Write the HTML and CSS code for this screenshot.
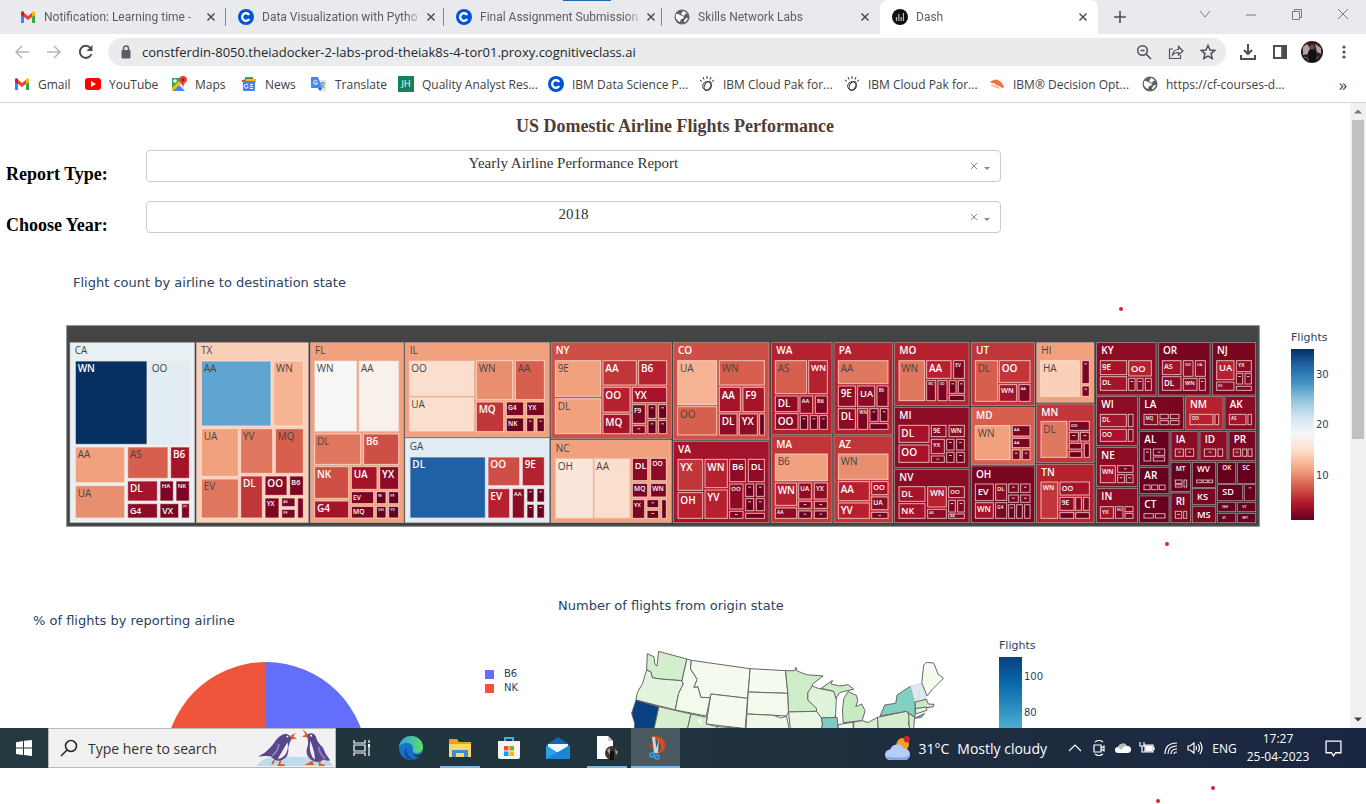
FILE: index.html
```html
<!DOCTYPE html>
<html lang="en">
<head>
<meta charset="utf-8">
<title>Dash</title>
<link rel="stylesheet" href="styles.css">
</head>
<body>
<svg class="defs" width="0" height="0" aria-hidden="true">
  <symbol id="gmail" viewBox="0 0 16 16"><path d="M1 3.5V14h3V7z" fill="#4285f4"/><path d="M12 7v7h3V3.500z" fill="#34a853"/><path d="M4 3.800V8l4 3 4-3V3.800L8 7z" fill="#ea4335"/><path d="M1 3.500C1 2 3 1.800 4 3v5L1 6z" fill="#c5221f"/><path d="M15 3.500C15 2 13 1.800 12 3v5l3-2z" fill="#fbbc04"/></symbol>
  <symbol id="coursera" viewBox="0 0 16 16"><circle cx="8" cy="8" r="8" fill="#0056d2"/><path d="M11.200 6A3.800 3.800 0 1 0 11.200 10" fill="none" stroke="#fff" stroke-width="2.300"/></symbol>
  <symbol id="globe" viewBox="0 0 16 16"><circle cx="8" cy="8" r="7.500" fill="#5f6368"/><path d="M2 5q3-.5 5 1.500 2 0 3 2-1 1.500-3 1.500l-1 3Q2 11 1.800 8zM9 2q3 .5 4 2.500l-2 .5-1 2-3-2zM12 9l2 0q-1 3-3.500 4.500L10 12z" fill="#fff"/></symbol>
  <symbol id="watson" viewBox="0 0 16 16"><g fill="none" stroke="#333" stroke-width="1"><circle cx="8" cy="10" r="4.300"/><ellipse cx="8.500" cy="9.500" rx="3" ry="4.800" transform="rotate(30 8 10)"/><path d="M8 0v3M4 1l1 2.500M12 1l-1 2.500M1 4l2 1.500M15 4l-2 1.500"/></g></symbol>
  <symbol id="close" viewBox="0 0 10 10"><path d="M1.500 1.500l7 7M8.500 1.500l-7 7" stroke="#4b4e52" stroke-width="1.500"/></symbol>
</svg>

<header class="browser">
  <nav class="tabs" aria-label="Tabs">
    <div class="tab"><svg class="fav"><use href="#gmail"/></svg><span class="tab-name">Notification: Learning time -</span><button class="x" aria-label="Close tab"><svg><use href="#close"/></svg></button></div>
    <div class="tab"><svg class="fav"><use href="#coursera"/></svg><span class="tab-name">Data Visualization with Pytho</span><button class="x" aria-label="Close tab"><svg><use href="#close"/></svg></button></div>
    <div class="tab"><svg class="fav"><use href="#coursera"/></svg><span class="tab-name">Final Assignment Submission</span><button class="x" aria-label="Close tab"><svg><use href="#close"/></svg></button></div>
    <div class="tab last"><svg class="fav"><use href="#globe"/></svg><span class="tab-name">Skills Network Labs</span><button class="x" aria-label="Close tab"><svg><use href="#close"/></svg></button></div>
    <div class="tab active"><svg class="fav" viewBox="0 0 16 16"><circle cx="8" cy="8" r="8" fill="#111"/><path d="M4.500 12V8M6.800 12V5M9.100 12V8M11.400 12V4" stroke="#bbb" stroke-width="1.200"/></svg><span class="tab-name">Dash</span><button class="x" aria-label="Close tab"><svg><use href="#close"/></svg></button></div>
    <button class="new-tab" aria-label="New tab"><svg viewBox="0 0 12 12"><path d="M6 0v12M0 6h12" stroke="#4b4e52" stroke-width="1.600"/></svg></button>
    <div class="window-buttons">
      <button aria-label="Search tabs"><svg viewBox="0 0 12 12"><path d="M1 3l5 6 5-6"/></svg></button>
      <button aria-label="Minimize"><svg viewBox="0 0 12 12"><path d="M1 7h10"/></svg></button>
      <button aria-label="Restore"><svg viewBox="0 0 12 12"><path d="M1.500 3.500h7v8h-7zM3.500 3.500v-2h7v8h-2"/></svg></button>
      <button aria-label="Close window"><svg viewBox="0 0 12 12"><path d="M1 1l10 10M11 1L1 11"/></svg></button>
    </div>
    <span class="drag-mark"></span>
  </nav>

  <div class="toolbar">
    <button aria-label="Back"><svg viewBox="0 0 16 16" class="off"><path d="M15 8H2M8 2L2 8l6 6"/></svg></button>
    <button aria-label="Forward"><svg viewBox="0 0 16 16" class="off"><path d="M1 8h13M8 2l6 6-6 6"/></svg></button>
    <button aria-label="Reload"><svg viewBox="0 0 16 16"><path d="M13.500 10A6 6 0 1 1 12.500 4" stroke-width="2"/><path d="M14.500 1v6h-6z" fill="#4b4e52" stroke="none"/></svg></button>
    <div class="omnibox">
      <svg class="lock" viewBox="0 0 10 14"><rect x="0.500" y="5" width="9" height="8.500" rx="1" fill="#5a5d61"/><path d="M2.500 5V3.500a2.500 2.500 0 0 1 5 0V5" fill="none" stroke="#5a5d61" stroke-width="1.500"/></svg>
      <input class="url" type="text" aria-label="Address" value="constferdin-8050.theiadocker-2-labs-prod-theiak8s-4-tor01.proxy.cognitiveclass.ai">
      <button aria-label="Zoom"><svg viewBox="0 0 16 16"><circle cx="6.500" cy="6.500" r="4.800"/><path d="M10 10l5 5M4.500 6.500h4"/></svg></button>
      <button aria-label="Share"><svg viewBox="0 0 16 16"><path d="M5 5H1.500v9.500h11V11M4.500 11c.5-4 3-5.500 6-5.500V2.500L15 7l-4.500 4V8.500c-2.500 0-4.500.5-6 2.500z" stroke-width="1.200"/></svg></button>
      <button aria-label="Bookmark"><svg viewBox="0 0 16 16"><path d="M8 1.500l2 4.500 4.700.4-3.600 3.200 1.100 4.900L8 12l-4.200 2.500 1.100-4.900L1.300 6.400 6 6z"/></svg></button>
    </div>
    <button aria-label="Downloads"><svg viewBox="0 0 16 16"><path d="M8 0v9M4 6l4 4 4-4M1 11v4h14v-4" stroke-width="2"/></svg></button>
    <button aria-label="Side panel"><svg viewBox="0 0 16 16"><path d="M2 2h12v12H2zM11 2v12" stroke-width="2"/><path d="M10 2h4v12h-4z" fill="#4b4e52"/></svg></button>
    <button aria-label="Profile"><svg class="avatar" viewBox="0 0 22 22"><circle cx="11" cy="11" r="11" fill="#292124"/><path d="M2 6l4-3 3 4-2 6-5 1zM14 3l6 4v6l-4-2z" fill="#b5a49b"/><circle cx="11" cy="6" r="2.500" fill="#6b4a3c"/><path d="M7 21V11q4-5 8 0v10z" fill="#111018"/><path d="M3 16l4 1v3M18 15l-3 3" stroke="#7a6258" stroke-width="1" fill="none"/></svg></button>
    <button aria-label="Menu"><svg viewBox="0 0 16 16"><g fill="#4b4e52" stroke="none"><circle cx="8" cy="3" r="1.600"/><circle cx="8" cy="8" r="1.600"/><circle cx="8" cy="13" r="1.600"/></g></svg></button>
  </div>

  <nav class="bookmarks" aria-label="Bookmarks">
    <a href="#"><svg><use href="#gmail"/></svg>Gmail</a>
    <a href="#"><svg viewBox="0 0 16 16"><rect y="2" width="16" height="12" rx="3" fill="#f00"/><path d="M6 5l5 3-5 3z" fill="#fff"/></svg>YouTube</a>
    <a href="#"><svg viewBox="0 0 16 16"><path d="M1 2h12v13H1z" fill="#34a853"/><path d="M1 15L13 4v11z" fill="#e8eaed"/><path d="M1 15l7-6 6 6z" fill="#4285f4"/><path d="M1 12l8-8 2 2-9 9H1z" fill="#fbbc04"/><path d="M12 0a4 4 0 0 1 4 4c0 2-3 3-4 7-1-4-4-5-4-7a4 4 0 0 1 4-4z" fill="#ea4335"/><circle cx="12" cy="4" r="1.400" fill="#8b1a12"/><circle cx="4" cy="5" r="1.800" fill="#fff"/></svg>Maps</a>
    <a href="#"><svg viewBox="0 0 16 16"><path d="M4 1h8v5H4z" fill="#34a853"/><path d="M1 4l11-2v4H1z" fill="#ea4335"/><path d="M5 3h10v4H5z" fill="#fbbc04"/><rect x="2" y="5" width="12" height="10" rx="1" fill="#4285f4"/><path d="M7 9A2 2 0 1 0 7.200 11H6M9 8.500h3M9 10.500h3M9 12.500h3" fill="none" stroke="#fff"/></svg>News</a>
    <a href="#"><svg viewBox="0 0 16 16"><path d="M6 4h9v11.500H9z" fill="#dfe3e8"/><path d="M0 1h7l4 11H1q-1 0-1-1z" fill="#4285f4"/><path d="M6 5A2 2 0 1 0 6.500 7H4.500" fill="none" stroke="#fff"/><path d="M9 7h5M11.500 6v1M10 8l3 4M13.500 8l-3.500 4" stroke="#607d9b" fill="none"/><path d="M7 12h4l-2 3z" fill="#1a56b8"/></svg>Translate</a>
    <a href="#"><span class="jh">JH</span>Quality Analyst Res...</a>
    <a href="#"><svg><use href="#coursera"/></svg>IBM Data Science P...</a>
    <a href="#"><svg><use href="#watson"/></svg>IBM Cloud Pak for...</a>
    <a href="#"><svg><use href="#watson"/></svg>IBM Cloud Pak for...</a>
    <a href="#"><svg viewBox="0 0 16 16"><path d="M1 6q6-5 11 0 3 3 3 6-3 0-5-2-4-1-5-3-2 1-4-1z" fill="#f0743e"/><path d="M1 9q5-1 11 4-6-1-11-4z" fill="#f7b48f"/></svg>IBM® Decision Opt...</a>
    <a href="#"><svg><use href="#globe"/></svg>https://cf-courses-d...</a>
    <button class="more" aria-label="More bookmarks">»</button>
  </nav>
</header>

<div class="viewport">
  <main>
    <h1>US Domestic Airline Flights Performance</h1>
    <form class="filters">
      <label for="report">Report Type:</label>
      <div class="dropdown">
        <select id="report"><option>Yearly Airline Performance Report</option></select>
        <span class="marks"><svg viewBox="0 0 24 12"><path d="M2 3l6 6M8 3l-6 6" stroke="#888"/><path d="M15 7h6l-3 3z" fill="#888"/></svg></span>
      </div>
      <label for="year">Choose Year:</label>
      <div class="dropdown">
        <select id="year"><option>2018</option></select>
        <span class="marks"><svg viewBox="0 0 24 12"><path d="M2 3l6 6M8 3l-6 6" stroke="#888"/><path d="M15 7h6l-3 3z" fill="#888"/></svg></span>
      </div>
    </form>

    <section class="tree-graph">
      <h2>Flight count by airline to destination state</h2>
      <div class="tree-row">
        <svg id="treemap" viewBox="0 15 3582 606" role="img" aria-label="Treemap of flights by state and airline"></svg>
        <div class="scale">
          <p>Flights</p>
          <svg viewBox="0 0 50 172">
            <defs><linearGradient id="rdbu" x2="0" y2="1"><stop offset="0" stop-color="#053061"/><stop offset=".1" stop-color="#2166ac"/><stop offset=".2" stop-color="#4393c3"/><stop offset=".3" stop-color="#92c5de"/><stop offset=".4" stop-color="#d1e5f0"/><stop offset=".5" stop-color="#f7f7f7"/><stop offset=".6" stop-color="#fddbc7"/><stop offset=".7" stop-color="#f4a582"/><stop offset=".8" stop-color="#d6604d"/><stop offset=".9" stop-color="#b2182b"/><stop offset="1" stop-color="#67001f"/></linearGradient></defs>
            <rect width="23" height="171" fill="url(#rdbu)"/>
            <text x="25" y="29">30</text><text x="25" y="79">20</text><text x="25" y="130">10</text>
          </svg>
        </div>
      </div>
    </section>

    <div class="lower">
      <section class="pie-graph">
        <h2>% of flights by reporting airline</h2>
        <div class="pie-row">
          <svg class="pie" viewBox="0 0 206 206" role="img" aria-label="Pie chart"><path d="M103 103V0a103 103 0 0 1 0 206z" fill="#636efa"/><path d="M103 103V0a103 103 0 0 0 0 206z" fill="#ef553b"/></svg>
          <ul class="legend"><li class="b6">B6</li><li class="nk">NK</li></ul>
        </div>
      </section>
      <section class="map-graph">
        <h2>Number of flights from origin state</h2>
        <div class="map-row">
          <svg class="map" viewBox="0 0 1180 330" role="img" aria-label="Map of the United States">
            <g stroke="#666" stroke-width="3" stroke-linejoin="round">
              <path fill="#d3eecd" d="M112 71L132 80L135 103L141 108L146 64L231 87L216 152L150 147L127 143L123 126L110 120Z"/>
              <path fill="#e2f4dd" d="M110 120L123 126L127 143L150 147L216 152L220 162L206 190L196 240L78 210L82 188L98 160Z"/>
              <path fill="#084081" d="M78 210L147 230L125 330L72 330L74 280L65 250Z"/>
              <path fill="#f3faec" d="M231 87L244 91L242 117L262 148L252 172L264 170L273 202L301 203L289 258L196 240L206 190L220 162L216 152Z"/>
              <path fill="#f4faed" d="M244 91L421 116L413 205L303 192L301 203L273 202L264 170L252 172L262 148L242 117Z"/>
              <path fill="#f6fbf0" d="M303 192L413 205L406 296L289 282Z"/>
              <path fill="#d6efd0" d="M147 230L243 252L225 330H125Z"/>
              <path fill="#d3eecd" d="M243 252L291 262L289 282L322 290L318 330H225Z"/>
              <path fill="#e8f6e3" d="M322 290L406 296V330H318Z"/>
              <path fill="#f5fbef" d="M421 116L527 122L534 190L415 186Z"/>
              <path fill="#f3faec" d="M415 186L534 190L536 246L530 258L411 252Z"/>
              <path fill="#edf8e7" d="M411 252L490 256L515 264L530 258L545 330H406Z"/>
              <path fill="#ceecc8" d="M527 122L555 122L558 112L562 123L590 134L640 138L608 162L607 172L594 188L594 210L620 235L620 244L536 246L534 190Z"/>
              <path fill="#e0f3db" d="M607 168L625 175L672 184L680 196L677 262L635 264L620 250L620 235L594 210L594 188Z"/>
              <path fill="#ceecc8" d="M634 175L668 151L664 162L690 168L715 164L732 178L700 185L690 188L678 205L672 184Z"/>
              <path fill="#c8eac3" d="M715 185L740 196L744 212L738 230L756 222L766 243L757 272L700 278L698 240L702 205Z"/>
              <path fill="#e9f7e3" d="M536 246L620 244L635 264L638 285L625 330H545Z"/>
              <path fill="#7accc4" d="M635 264L682 262L688 330H625L638 285Z"/>
              <path fill="#f0f9e8" d="M685 284L730 277V330H688Z"/>
              <path fill="#d9f0d3" d="M732 276L757 272L775 278L803 262L808 330H730Z"/>
              <path fill="#d3eecd" d="M803 262L890 244L900 258L896 282L902 294L885 330H808Z"/>
              <path fill="#82d0c2" d="M811 258L825 225L858 220L862 195L903 168L916 218L916 262L890 244Z"/>
              <path fill="#64becb" d="M914 265L945 250L935 262Z"/>
              <path fill="#dfe7f2" stroke="#d2dbe8" d="M903 168L936 160L950 208L916 216ZM930 175L924 210"/>
              <path fill="#f5fbef" d="M936 158L942 105L950 97L972 99L985 132L1001 145L968 178L952 198Z"/>
              <path fill="#c8eac3" d="M916 216L950 208L956 222L973 223L970 231L917 236Z"/>
              <path fill="#e0f3db" d="M917 236L948 231L952 241L918 252Z"/>
              <path fill="#d3eecd" d="M897 250L914 262L912 300L904 330L898 285Z"/>
            </g>
            <path fill="#fff" d="M262 268l10-2 4 18-8-6z"/>
          </svg>
          <div class="scale">
            <p>Flights</p>
            <svg viewBox="0 0 50 172">
              <defs><linearGradient id="gnbu" x2="0" y2="1"><stop offset="0" stop-color="#084081"/><stop offset=".15" stop-color="#0868ac"/><stop offset=".29" stop-color="#2b8cbe"/><stop offset=".43" stop-color="#4eb3d3"/><stop offset="1" stop-color="#ccebc5"/></linearGradient></defs>
              <rect width="23" height="171" fill="url(#gnbu)"/>
              <text x="25" y="23">100</text><text x="25" y="59">80</text>
            </svg>
          </div>
        </div>
      </section>
    </div>
  </main>
  <div class="scrollbar" aria-hidden="true"><svg viewBox="0 0 16 16"><path d="M4 10h8L8 6z" fill="#777"/></svg><span></span><svg viewBox="0 0 16 16"><path d="M4 6h8l-4 4z" fill="#444"/></svg></div>
</div>

<footer class="taskbar">
  <button class="start" aria-label="Start"><svg viewBox="0 0 16 16"><path d="M0 2.200L7 1v6.500H0zM8 .8L16 0v7.500H8zM0 8.500h7V15L0 14zM8 8.500h8V16l-8-.9z" fill="#fff"/></svg></button>
  <div class="search">
    <svg class="glass" viewBox="0 0 18 18"><circle cx="11" cy="7" r="5.500"/><path d="M7 11l-6 6"/></svg>
    <input type="text" aria-label="Search" placeholder="Type here to search">
    <svg class="birds" viewBox="0 0 80 40">
      <path d="M0 39q4-9 22-10l40 1q15 2 18 9z" fill="#bcdcec"/>
      <path d="M1 29q9-4 16-13 6-10 13-11 6 1 6 6-2 4-3 8 1 11-7 14-7 2-11-4-5-1-14 0z" fill="#57488b"/>
      <path d="M32 14q2 8-3 14-4 4-7 3 5-8 10-17z" fill="#f3eef6"/><path d="M35 7l6-3-3 4 4 2-6 1z" fill="#e5532b"/><circle cx="32" cy="8" r="1" fill="#fff"/>
      <path d="M18 33l-2 4M25 33l-2 5h6" stroke="#e5532b" stroke-width="2" fill="none"/>
      <path d="M23 16q-1 8-7 12" stroke="#8c80bd" stroke-width="2" fill="none"/>
      <path d="M52 6q7-4 10 2 1 6 7 11 3 8 8 14-3 1-7-1-6 5-12 1-8-5-5-14 2-7-1-13z" fill="#57488b"/>
      <path d="M56 12q5 12 5 20-7-5-5-20z" fill="#f3eef6"/><path d="M53 9l-6-1 4-2-3-6 6 6z" fill="#e5532b"/><circle cx="57" cy="7" r="1" fill="#fff"/>
      <path d="M65 19q1 8 7 12" stroke="#8c80bd" stroke-width="2" fill="none"/>
      <path d="M59 34l-5 3h6M66 34v4h5" stroke="#e5532b" stroke-width="2" fill="none"/>
    </svg>
  </div>
  <div class="apps">
    <button aria-label="Task view"><svg class="small" viewBox="0 0 18 18"><path d="M1 1v3h11V1M1 6h11v6H1zM1 17v-3h11v3M16 1v3M16 8v9" fill="none" stroke="#fff" stroke-width="1.200"/><path d="M15 5h2v3h-2z" fill="#fff"/></svg></button>
    <button aria-label="Edge"><svg viewBox="0 0 24 24"><defs><linearGradient id="edge" x2="1"><stop offset="0" stop-color="#2aa7e8"/><stop offset="1" stop-color="#5edc63"/></linearGradient></defs><circle cx="12" cy="12" r="12" fill="#1673c9"/><path d="M0 11C1 3 8 0 12 0c8 0 12 6 12 11 0 4-3 6-6 6s-5-1-4-3c1-5-3-7-6-7-4 0-7 2-8 4z" fill="url(#edge)"/><path d="M13 13c-1 4 1 6 5 6q4 0 6-3l-2 5-5 0q-5-3-4-8z" fill="#223840"/><path d="M8 11c-2 5 2 11 10 12q-4 2-9 0c-5-3-4-10-1-12z" fill="#0f4f9e"/></svg></button>
    <button class="running" aria-label="File Explorer"><svg viewBox="0 0 24 24"><path d="M1 3h8l2 3h12v15H1z" fill="#e6a520"/><path d="M1 8h22v13H1z" fill="#ffd66b"/><path d="M4 14h16v7h-4v-4H8v4H4z" fill="#3b8ed4"/></svg></button>
    <button aria-label="Store"><svg viewBox="0 0 24 24"><path d="M8 7V2h8v5" fill="none" stroke="#37b3e6" stroke-width="2"/><path d="M1 5h22v16q0 2-2 2H3q-2 0-2-2z" fill="#f4f4f4"/><path d="M7 10h4.500v4.500H7z" fill="#f25022"/><path d="M12.500 10H17v4.500h-4.500z" fill="#7fba00"/><path d="M7 15.500h4.500V20H7z" fill="#00a4ef"/><path d="M12.500 15.500H17V20h-4.500z" fill="#ffb900"/></svg></button>
    <button aria-label="Mail"><svg viewBox="0 0 24 24"><path d="M0 9l12-8 12 8z" fill="#1264b4"/><path d="M2 8h20v8H2z" fill="#f3f6fa"/><path d="M0 9l12 8 12-8v14H0z" fill="#28a1ea"/><path d="M0 23l24-14v14z" fill="#1b86d6"/></svg></button>
    <button class="running" aria-label="Document"><svg viewBox="0 0 24 24"><path d="M2 0h11l5 5v18H2z" fill="#fff"/><path d="M13 0v5h5z" fill="#c8cdd1"/><circle cx="17" cy="17" r="7" fill="#3b3335"/><path d="M12 14l3-2v7zM20 13l3 3-2 3z" fill="#b6a39a"/><path d="M15 24v-8q2-3 4 0v8z" fill="#111"/></svg></button>
    <button class="running current" aria-label="Snipping Tool"><svg viewBox="0 0 24 24"><path d="M8 0q13 0 13 9 0 8-9 9 6-3 5-9-1-5-9-6z" fill="#e4471d"/><path d="M8 1h3l2 16h-3zM15 3l-1 14h-3z" fill="#cbd4da"/><path d="M4 7l5 2-1 4z" fill="#d13b1a"/><circle cx="8" cy="19" r="2" fill="none" stroke="#3794db" stroke-width="2"/><circle cx="13" cy="21" r="2" fill="none" stroke="#3794db" stroke-width="2"/></svg></button>
  </div>
  <div class="tray">
    <button class="weather"><svg viewBox="0 0 24 24"><circle cx="17" cy="8" r="6" fill="#f5a02a"/><circle cx="21" cy="3" r="3" fill="#d1242f"/><path d="M5 23a5 5 0 0 1 0-10 7 7 0 0 1 13-1 5.500 5.500 0 0 1 1 11z" fill="#b4cff7"/><path d="M1 20q2 3 5 3h13q4 0 5-4-9 3-23 1z" fill="#83a9e8"/></svg><span>31°C</span><span>Mostly cloudy</span></button>
    <button aria-label="Show hidden icons"><svg viewBox="0 0 16 16"><path d="M2 11l6-6 6 6"/></svg></button>
    <button aria-label="Meet now"><svg viewBox="0 0 16 16"><path d="M4 2q4-3 8 0M4 14q4 3 8 0M3 5h7v7H3zM10 8l3-2v5l-3-2"/></svg></button>
    <button aria-label="OneDrive"><svg viewBox="0 0 16 16"><path d="M3 13a3 3 0 0 1 0-6 5 5 0 0 1 9-1 3.500 3.500 0 0 1 1 7z" fill="#fff" stroke="none"/><path d="M3 7a5 5 0 0 1 9-1q-4 0-6 4z" fill="#b5bbc0" stroke="none"/></svg></button>
    <button aria-label="Battery"><svg viewBox="0 0 16 16"><path d="M1 2v4h4V2M3 6v6h3M6 5h8v7H6zM15 7v3"/><path d="M7 6h6v5H7z" fill="#fff"/></svg></button>
    <button aria-label="Network"><svg viewBox="0 0 16 16"><path d="M2 14Q2 3 14 3M5 14q0-8 9-8M8 14q0-5 6-5M11 14q0-2 3-2"/></svg></button>
    <button aria-label="Volume"><svg viewBox="0 0 16 16"><path d="M1 6h2l4-3v10l-4-3H1zM9 6q1 2 0 4M11 4q3 4 0 8M13 2q4 6 0 12"/></svg></button>
    <button class="lang">ENG</button>
    <button class="clock"><span>17:27</span><span>25-04-2023</span></button>
    <button class="notes" aria-label="Notifications"><svg viewBox="0 0 16 16"><path d="M1 1h14v11h-5l-2 3-2-3H1z"/></svg></button>
  </div>
</footer>

<span class="dot d1"></span><span class="dot d2"></span><span class="dot d3"></span><span class="dot d4"></span>
<script src="treemap.js"></script>
</body>
</html>
```

FILE: styles.css
```css
* { box-sizing: border-box; }
body { margin: 0; min-height: 100vh; background: #fff; position: relative; overflow: hidden; font-family: "Open Sans", sans-serif; font-size: 12px; color: #3c4043; display: flex; flex-direction: column; }
button { border: 0; background: none; padding: 0; font: inherit; color: inherit; display: flex; align-items: center; justify-content: center; }
input { border: 0; background: none; font: inherit; outline: 0; }
h1, h2, p, ul { margin: 0; padding: 0; }
.defs { position: absolute; }

.tabs { position: relative; display: flex; height: 34px; background: #e8eaed; padding-left: 8px; }
.tab { flex: 0 1 218px; display: flex; align-items: center; gap: 8px; padding: 0 10px 0 12px; min-width: 0; position: relative; }
.tab::after { content: ""; position: absolute; right: 0; top: 8px; height: 18px; border-right: 1px solid #85888c; }
.tab.last::after, .tab.active::after { display: none; }
.tab.active { background: #fff; border-radius: 8px 8px 0 0; }
.fav { width: 16px; height: 16px; flex: none; }
.tab-name { flex: 1; white-space: nowrap; color: #5b5e62; font-family: Roboto, sans-serif; mask-image: linear-gradient(90deg, #000 92%, rgba(0, 0, 0, .3)); }
.x svg { width: 10px; height: 10px; }
.new-tab { width: 44px; }
.new-tab svg { width: 12px; height: 12px; }
.window-buttons { margin-left: auto; display: flex; }
.window-buttons button { width: 46px; height: 28px; }
.window-buttons svg { width: 12px; height: 12px; fill: none; stroke: #777a7e; }
.drag-mark { position: absolute; left: 563px; top: 0; width: 48px; height: 1px; background: #2267ad; }

.toolbar { display: flex; align-items: center; height: 36px; padding: 0 6px; }
.toolbar button { width: 32px; height: 28px; flex: none; }
.toolbar svg { width: 16px; height: 16px; fill: none; stroke: #4b4e52; stroke-width: 1.5; }
.toolbar svg.off { stroke: #b4b6b9; }
.toolbar svg.avatar { width: 22px; height: 22px; stroke-width: 0; }
.omnibox { flex: 1; display: flex; align-items: center; height: 28px; margin: 0 6px 0 6px; padding: 0 2px 0 13px; border-radius: 14px; background: #e9ebed; }
.toolbar .lock { width: 10px; height: 14px; stroke: none; }
.url { flex: 1; min-width: 0; padding: 0 0 0 11px; font-size: 13px; color: #25282b; }

.bookmarks { display: grid; grid-template-columns: 71px 86px 70px 70px 87px 150px 151px 145px 145px 153px 1fr 32px; align-items: center; height: 33px; padding: 0 7px 4px 14px; border-bottom: 1px solid #d5d7da; }
.bookmarks a { display: flex; align-items: center; gap: 8px; white-space: nowrap; color: inherit; text-decoration: none; }
.bookmarks svg { width: 16px; height: 16px; flex: none; }
.jh { width: 16px; height: 16px; background: #16825d; color: #fff; font-size: 9px; line-height: 16px; text-align: center; }
.more { font-size: 17px; line-height: 17px; }

.viewport { display: flex; height: calc(100vh - 179px); min-height: 0; }
main { flex: 1; min-width: 0; overflow: hidden; font-family: "Liberation Serif", serif; color: #000; }
h1 { margin-top: 12px; font-size: 18px; line-height: 22px; text-align: center; color: #503d36; }
.filters { display: grid; grid-template-columns: 140px 71fr 29fr; row-gap: 19px; margin-top: 13px; padding-left: 6px; }
.filters label { grid-column: 1; font-size: 18px; font-weight: bold; line-height: 48px; height: 32px; }
.dropdown { position: relative; height: 32px; }
.dropdown select { width: 100%; height: 32px; appearance: none; border: 1px solid #ccc; border-radius: 4px; background: #fff; padding: 0 0 6px; font: 15px "Liberation Serif", serif; text-align: center; text-align-last: center; color: #333; }
.marks { position: absolute; right: 8px; top: 10px; }
.marks svg { display: block; width: 24px; height: 12px; fill: none; }

h2 { font: 13px/16px "DejaVu Sans", sans-serif; color: #2a3f5f; }
.tree-graph h2 { margin: 42px 0 34px 73px; }
.tree-row { display: flex; padding-left: 66px; }
#treemap { flex: 1; min-width: 0; font-family: "Open Sans", sans-serif; }
#treemap .light { fill: #fff; font-weight: 600; }
#treemap .dark { fill: #444; }
.scale { flex: none; width: 59px; margin-left: 31px; padding-top: 6px; }
.scale p, .scale text { font: 11px/14px "DejaVu Sans", sans-serif; color: #2a3f5f; }
.scale text { font-size: 10px; fill: #2a3f5f; }
.scale svg { display: block; width: 50px; height: 172px; margin-top: 4px; }

.lower { display: grid; grid-template-columns: 544px 1fr; padding-top: 70px; }
.pie-graph h2 { margin: 16px 0 33px 33px; }
.pie-row { display: flex; align-items: flex-start; padding-left: 165px; gap: 118px; }
.pie { width: 202px; height: 202px; }
.legend { list-style: none; padding-top: 5px; font: 10px/14px "DejaVu Sans", sans-serif; color: #2a3f5f; }
.legend li { display: flex; align-items: center; gap: 10px; }
.legend li::before { content: ""; width: 9px; height: 9px; background: #636efa; }
.legend .nk::before { background: #ef553b; }
.map-graph { padding-left: 14px; padding-top: 1px; }
.map-row { display: flex; padding: 16px 0 0 52px; }
.map { width: 393px; height: 110px; flex: none; }
.map-row .scale { margin-left: -4px; padding-top: 9px; }

.scrollbar { width: 16px; background: #f1f1f1; display: flex; flex-direction: column; justify-content: space-between; }
.scrollbar svg { width: 16px; height: 17px; }
.scrollbar span { height: 51%; margin: 0 2px auto; background: #c1c1c1; }

.taskbar { display: flex; height: 40px; background: linear-gradient(90deg, #23383f 0%, #20343e 45%, #1e2c3f 75%, #1a2542 100%); color: #fff; }
.start { width: 48px; }
.start svg { width: 16px; height: 16px; }
.search { display: flex; align-items: center; width: 288px; background: #f1f1f1; border: 1px solid #b5b7b8; padding-left: 11px; }
.search .glass { width: 18px; height: 18px; fill: none; stroke: #222; stroke-width: 1.5; flex: none; }
.search input { flex: 1; min-width: 0; padding: 0 0 0 10px; font-size: 14px; color: #333; }
.search input::placeholder { color: #333; opacity: 1; }
.birds { width: 80px; height: 38px; flex: none; }
.apps { display: flex; padding-left: 1px; }
.apps button { width: 49px; padding: 0 4px; position: relative; }
.apps svg { width: 24px; height: 24px; }
.apps svg.small { width: 18px; height: 18px; }
.apps .running::after { content: ""; position: absolute; left: 5px; right: 4px; bottom: 0; height: 2px; background: #76b9ed; }
.apps .current { background: #49595f; }
.apps .current::after { left: 0; right: 0; }
.tray { margin-left: auto; display: flex; align-items: center; padding-right: 14px; }
.tray button { width: 24px; height: 40px; }
.tray svg { width: 16px; height: 16px; fill: none; stroke: #fff; stroke-width: 1.2; }
.tray .weather { width: auto; gap: 8px; font-size: 14px; margin-right: 16px; white-space: nowrap; }
.tray .weather svg { width: 25px; height: 25px; stroke: none; }
.tray .lang { width: 35px; }
.tray .clock { width: 72px; flex-direction: column; line-height: 18px; }
.tray .notes { width: 38px; }
.tray .notes svg { width: 17px; height: 17px; }

.dot { position: absolute; width: 4px; height: 4px; border-radius: 50%; background: #d8222e; }
.d1 { left: 1119px; top: 307px; }
.d2 { left: 1165px; top: 542px; }
.d3 { left: 1211px; top: 786px; }
.d4 { left: 1156px; top: 799px; }
```

FILE: treemap.js
```js
// Each column: x offset, then cells "label x1 y1 x2 y2 colour [size]".
// A leading "*" marks a state; "." is a cell too small for its label.
const palette = {
  a: "#053061", b: "#2060a4", c: "#5fa5cf", d: "#e1ecf3", D: "#e8f0f4", e: "#f7f7f7", f: "#f8f0eb",
  g: "#fbdfce", G: "#fbe6dc", h: "#fbd0b9", i: "#f7b495", j: "#f2a17e", k: "#e88f70", l: "#e0785f",
  m: "#d6604d", n: "#ce4f45", N: "#d6604d", o: "#c13639", p: "#b6212f", q: "#a5142a", r: "#8d0c25", s: "#7a0622", t: "#67001f"
};
const columns = [
[-18, `
*CA 30 68 404 608 D
WN 46 123 261 373 a|OO 268 123 388 373 d|AA 46 381 194 488 j|UA 46 497 194 594 k|AS 203 381 324 475 m|B6 332 381 388 475 q|DL 203 483 292 543 q|HA 300 483 340 543 s 18|NK 348 483 388 543 s 18|G4 203 551 292 594 r 26|VX 300 551 356 594 s 26|PY 365 551 388 594 s 9
*TX 409 68 745 608 h
AA 424 123 633 318 c|WN 641 123 730 318 i|UA 424 326 535 469 j|EV 424 477 535 594 l|YV 542 326 638 460 l|MQ 646 326 730 460 m|DL 542 468 607 594 o|OO 615 468 681 526 r|B6 689 468 730 526 s 22|YX 615 534 657 594 s 20|AS 665 534 705 560 s 11|F9 665 568 705 594 s 11|. 713 534 730 594 s`],
[717, `
*FL 16 68 296 608 j
WN 28 122 156 335 e|AA 161 122 282 335 f|DL 29 342 167 433 l|B6 176 342 281 433 n|NK 29 440 131 535 n|G4 29 543 131 594 q|UA 139 440 216 508 q|YX 224 440 281 508 r|EV 139 515 206 551 s 20|MQ 139 559 206 594 s 20|9E 214 515 243 551 t 11|F9 251 515 281 551 t 11|OH 214 559 243 594 t 11|YV 251 559 281 594 t 11
*IL 300 68 733 351 j
OO 312 122 508 229 g|UA 312 231 508 335 g|WN 514 122 623 239 k|AA 631 122 718 239 m|MQ 514 246 596 335 o|G4 604 246 656 287 s 20|YX 665 246 718 287 s 20|NK 604 294 656 335 t 20|. 665 294 687 335 t|. 696 294 718 335 t
*GA 300 354 733 608 d
DL 315 411 541 594 b|OO 549 411 644 497 n|9E 652 411 718 497 p|EV 549 506 614 594 p|AA 622 506 658 594 r 17|. 666 506 687 546 t|. 696 506 718 546 t|. 666 553 687 594 t|. 696 553 718 594 t`],
[1437, `
*NY 18 68 379 355 n
9E 31 122 167 229 j|DL 31 236 167 341 j|AA 174 122 274 195 o|B6 281 122 365 195 p|OO 174 202 255 276 p|MQ 174 283 255 341 q|YX 262 202 365 248 q|F9 262 254 301 310 s 20|. 262 317 301 341 s|. 309 254 333 295 t|. 341 254 365 295 t|. 309 302 333 341 t|. 341 302 365 341 t
*NC 18 360 379 608 j
OH 31 415 145 595 G|AA 147 415 255 595 g|DL 262 415 308 482 r 28|OO 317 415 364 482 r 20|MQ 262 490 308 531 s 20|WN 317 490 364 531 s 20|YX 262 539 299 595 s 17|. 306 539 341 563 t|. 306 571 341 595 t|. 350 539 364 595 t
*CO 385 68 672 360 n
UA 398 122 515 254 i|WN 523 122 658 195 m|OO 398 260 515 345 m|AA 523 202 586 275 q|F9 594 202 658 275 q|DL 523 282 576 345 r|YX 583 282 637 345 r|. 644 282 658 345 t
*VA 385 364 672 608 q
YX 399 418 473 511 o|OH 399 518 473 595 p|WN 480 418 547 503 p|YV 480 510 547 595 p|B6 554 418 601 485 r 28|DL 610 418 658 485 r 28|OO 554 492 594 567 r 18|. 554 574 594 595 s|. 602 492 626 529 t|. 634 492 658 529 t|. 602 536 626 572 t|. 634 536 658 572 t|. 602 580 658 595 t`],
[2097, `
*WA 20 68 201 343 p
AS 31 122 125 221 m|WN 131 122 187 221 p 26|DL 31 228 99 275 r|OO 31 281 99 328 r|AA 105 228 143 280 r 17|B6 151 228 187 280 s 17|. 106 287 128 328 t|. 136 287 158 328 t|. 164 287 187 328 t
*PA 207 68 383 343 p
AA 220 122 369 191 l|9E 220 198 271 259 r|UA 278 198 329 259 r 28|B6 336 198 369 259 s 13|DL 220 266 271 328 r|WN 278 266 308 328 s 13|. 315 266 339 304 t|. 346 266 369 304 t|. 315 311 369 328 t
*MA 20 348 201 608 o
B6 31 402 187 482 j|WN 31 489 95 556 p|AA 31 564 95 595 r 15|UA 101 489 139 537 r 19|YX 148 489 187 537 r 19|. 101 544 139 565 s|. 148 544 187 565 s|. 101 573 139 595 t|. 148 573 187 595 t
*AZ 207 348 383 608 o
WN 220 402 369 478 k|AA 220 485 313 542 p|YV 220 549 313 595 p|OO 320 485 369 524 q 22|UA 320 531 369 569 r 20|. 320 577 369 595 s
*MO 389 68 612 256 p
WN 402 122 479 242 l|AA 485 122 558 175 p|EV 566 122 598 175 s 14|MQ 485 182 511 242 s 9|OO 519 182 546 242 s 9|. 553 182 573 220 t|. 580 182 598 220 t|. 553 226 598 242 t
*MI 389 262 612 442 r
DL 402 316 492 367 q|OO 402 375 492 427 q|9E 499 316 543 350 r 20|WN 552 316 598 350 r 19|YX 499 358 538 401 r 18|. 499 408 538 427 s|. 545 358 567 390 t|. 575 358 598 390 t|. 545 397 567 427 t|. 575 397 598 427 t
*NV 389 448 612 608 r
DL 402 500 480 544 q 27|NK 402 551 480 595 q 27|WN 488 500 544 561 p 25|AS 488 568 544 595 r 11|OO 551 500 598 533 r 18|. 551 541 571 576 s|. 578 541 598 576 s|AA 551 582 598 595 s 10`],
[2697, `
*UT 19 68 209 257 o
DL 31 122 98 244 m|OO 103 122 195 187 o|WN 103 194 155 244 q 22|AA 162 194 195 244 s 12
*MD 19 263 209 434 N
WN 31 317 135 419 j|AA 142 317 195 348 s 12|AA 142 355 195 383 s 12|. 142 390 165 419 s|. 172 390 195 419 s
*OH 19 438 209 608 s
EV 31 492 85 542 s 28|WN 31 548 85 595 q 24|DL 92 492 125 541 r 17|G4 92 548 125 595 s 14|. 131 492 160 517 s|. 167 492 195 517 s|. 131 525 160 547 s|. 167 525 195 547 s|. 131 554 149 595 t|. 155 554 172 595 t|. 179 554 195 595 t
*HI 215 68 387 247 j
HA 227 122 343 229 h|. 351 122 373 191 s|. 351 198 373 229 s
*MN 215 252 387 427 o
DL 228 304 306 412 l|OO 313 304 373 331 s 12|. 313 337 340 363 s|. 346 337 373 363 s|. 313 370 350 387 t|. 313 395 350 412 t|. 358 370 373 412 t
*TN 215 433 387 608 p
WN 228 486 278 595 o 20|OO 285 486 373 525 q 22|9E 285 532 327 571 r 20|. 332 532 349 571 s|. 356 532 373 571 s|. 285 578 326 595 t|. 332 578 373 595 t`],
[3072, `
*KY 20 68 198 225 r
9E 31 122 110 164 q 24|DL 31 170 110 211 q 22|OO 116 122 184 168 p 28|. 116 175 135 211 s|. 141 175 159 211 s|. 166 175 184 211 s
*OR 205 68 360 225 s
AS 217 122 273 164 q 22|DL 217 170 273 211 r 24|OO 280 122 309 169 r 11|UA 316 122 346 169 r 11|WN 280 175 321 211 r 17|. 328 175 346 211 s
*NJ 367 68 497 225 s
UA 380 122 432 179 p 28|YX 439 122 484 155 r 16|EV 380 186 432 211 r 10|. 439 160 458 192 s|. 465 160 484 192 s|. 439 199 484 211 s
*WI 20 230 142 377 r
DL 31 283 109 320 q 19|OO 31 328 109 364 q 19|. 115 283 129 320 s|. 115 328 129 364 s
*NE 20 383 142 500 r
WN 31 437 76 488 q 20|. 83 437 129 457 s|. 83 464 103 488 s|. 109 464 129 488 s
*IN 20 506 142 608 r
YX 31 560 70 595 q 17|MQ 76 560 99 595 s 9|. 105 560 129 575 s|. 105 580 129 595 s
*LA 149 230 280 328 s
MQ 162 283 203 314 r 13|. 210 283 235 296 s|. 241 283 267 296 s|. 210 302 235 314 s|. 241 302 267 314 s
*NM 286 230 399 328 p
OO 300 283 369 314 p 14|. 375 283 386 314 r
*AK 405 230 497 328 r
AS 418 283 468 314 q 14|. 474 283 484 314 s
*AL 149 334 237 437 t
. 162 387 182 423 t|. 190 387 224 406 t|. 190 411 224 423 t
*IA 243 334 324 422 r
. 256 387 280 409 r|. 287 387 311 409 s
*ID 330 334 411 422 r
. 343 387 377 409 r|. 384 387 398 409 s
*PR 417 334 497 422 s
. 430 387 452 409 r|. 458 387 470 409 s|. 474 387 486 409 s
*AR 149 442 237 521 t
. 162 495 180 509 t|. 185 495 203 509 t|. 208 495 225 509 t
*CT 149 528 237 608 t
. 162 581 190 594 t|. 196 581 225 594 t
*MT 243 427 301 514 t 20
. 256 480 276 490 t|. 256 494 276 501 t|. 282 480 290 501 t
*RI 243 519 301 608 s
. 256 574 275 595 s|. 281 574 290 595 t
*WV 307 427 377 502 t 25
. 320 480 335 488 t|. 339 480 352 488 t|. 356 480 368 488 t
*KS 307 506 377 554 s 28
*MS 307 560 377 608 s 28
*OK 383 427 437 490 t 19
*SC 443 427 497 490 t 19
*SD 383 494 457 542 t 27
*. 463 494 497 542 t
*NH 383 547 437 575 t 11
*VT 443 547 497 575 t 11
*VI 383 580 437 608 t 11
*WY 443 580 497 608 t 11`]
];

const ns = "http://www.w3.org/2000/svg";
const chart = document.getElementById("treemap");
function add(tag, attrs, text) {
  const node = document.createElementNS(ns, tag);
  for (const key in attrs) node.setAttribute(key, attrs[key]);
  if (text) node.textContent = text;
  chart.appendChild(node);
}
add("rect", { x: 2, y: 17, width: 3578, height: 602, fill: "#444", stroke: "#888", "stroke-width": 3 });
for (const [dx, source] of columns) {
  for (const entry of source.trim().split(/[\n|]/)) {
    let [label, x1, y1, x2, y2, colour, size] = entry.split(" ");
    const state = label[0] === "*";
    if (state) label = label.slice(1);
    const x = +x1 + dx, y = +y1, w = x2 - x1, h = y2 - y1, s = +(size || 30);
    const pale = "efgG".includes(colour);
    add("rect", { x, y, width: w, height: h, fill: palette[colour],
      stroke: state ? "#c4b5b4" : pale ? "#eeb399" : "#ffe5e0", "stroke-opacity": state ? .8 : .75, "stroke-width": state ? 2 : 3 });
    const dark = "cdDefgGhijklm".includes(colour);
    if (label === ".") {
      if (w > 17 && h > 17) add("rect", { x: x + w / 2 - 4, y: y + 8, width: 8, height: 3, fill: "#e6c9ce" });
    } else {
      const pad = s > 24 ? 7 : 5;
      const top = h < s * 1.7 ? (h + s * .72) / 2 : s + 4;
      add("text", { x: x + (state ? 14 : pad), y: y + (state ? (s < 15 ? 17 : s + 5) : top), "font-size": s, class: dark ? "dark" : "light" }, label);
    }
  }
}
```
